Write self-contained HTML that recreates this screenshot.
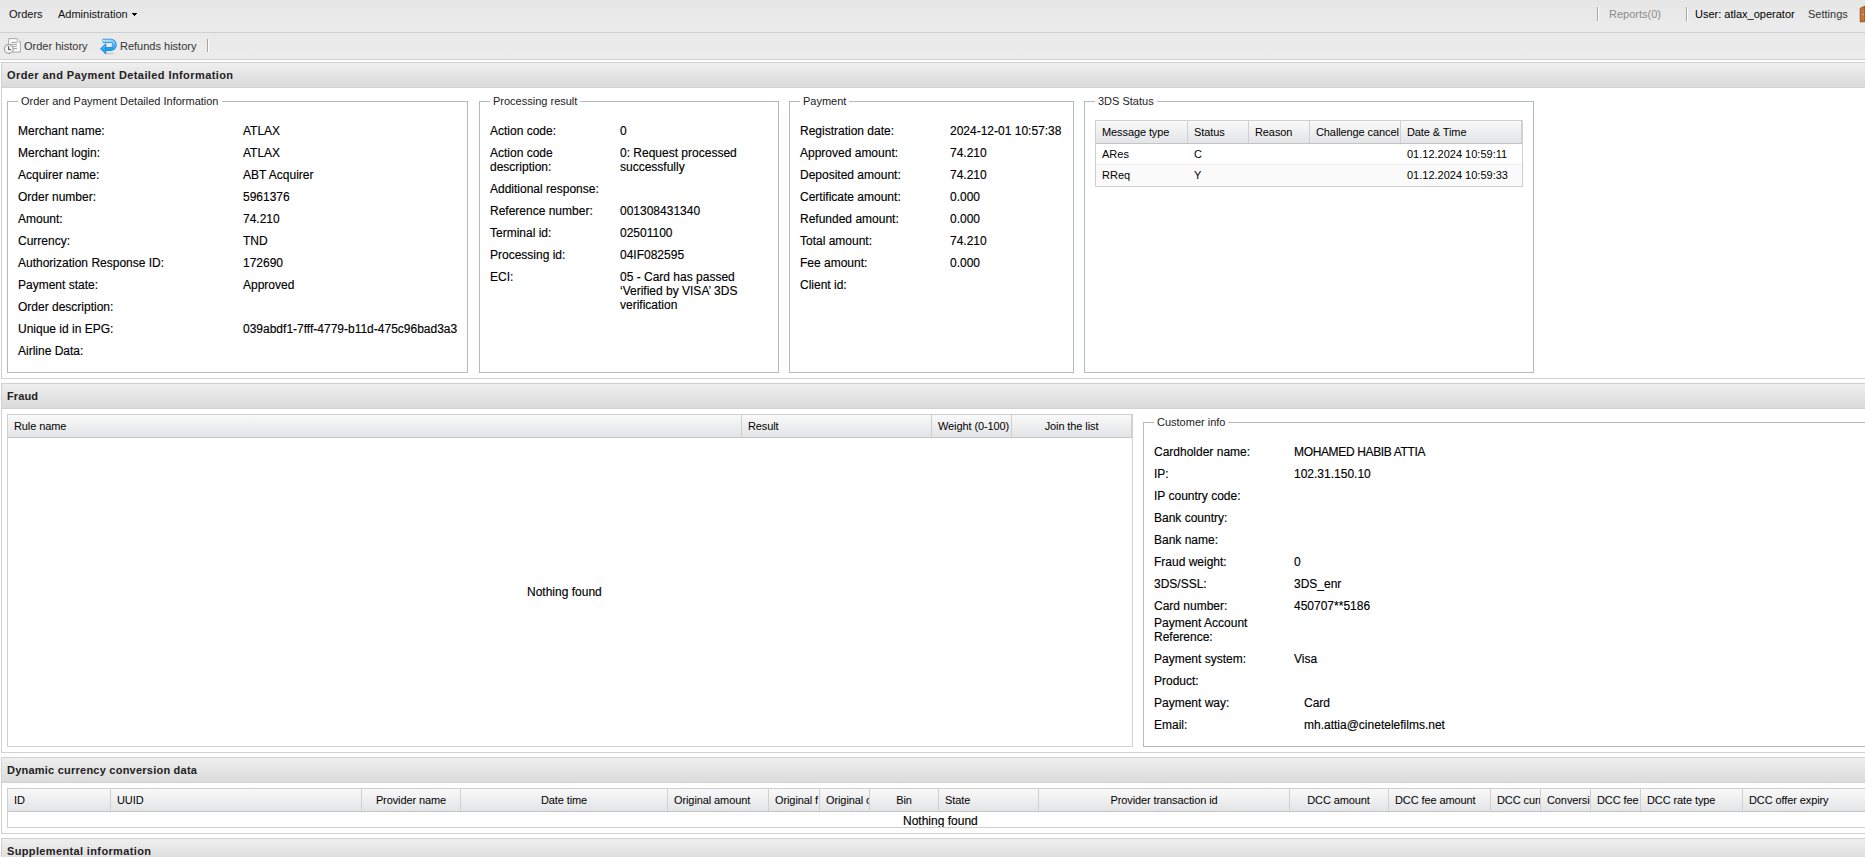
<!DOCTYPE html><html><head><meta charset="utf-8"><style>
*{box-sizing:border-box;margin:0;padding:0}
html,body{width:1865px;height:857px;overflow:hidden;background:#fff;font-family:"Liberation Sans", sans-serif;font-size:11px;color:#000}
.abs{position:absolute;white-space:nowrap}
.tb1{position:absolute;left:0;top:0;width:1865px;height:33px;background:linear-gradient(#e6e6e6,#ececec);border-bottom:1px solid #d0d0d0}
.tb2{position:absolute;left:0;top:33px;width:1865px;height:27px;background:linear-gradient(#e9e9e9,#ececec);border-bottom:1px solid #d0d0d0}
.panel{position:absolute;left:1px;width:1900px;border:1px solid #d0d0d0;background:#fff}
.ph{position:absolute;left:0;top:0;right:0;height:25px;background:linear-gradient(#efefef,#dadada);border-bottom:1px solid #d2d2d2}
.pt{position:absolute;left:5px;top:6px;font-weight:bold;font-size:11px;color:#222;letter-spacing:0.4px}
.fs{position:absolute;border:1px solid #b5b8c8}
.lg{position:absolute;top:-8px;background:#fff;padding:0 3px;font-size:11px;color:#222;line-height:14px}
.t12{font-size:12px;line-height:14px;color:#000;-webkit-text-stroke:0.15px #000}
.sep{position:absolute;width:1px;background:#aba592;box-shadow:1px 0 0 #fff}
.grid{position:absolute;border:1px solid #d0d0d0;background:#fff;overflow:hidden}
.gh{position:absolute;left:0;top:0;right:0;height:23px;background:linear-gradient(#f9f9f9,#e3e4e6);border-bottom:1px solid #c5c5c5}
.gc{position:absolute;top:0;height:22px;border-right:1px solid #d0d0d0;line-height:22px;overflow:hidden;white-space:nowrap;font-size:11px;color:#000;letter-spacing:-0.1px}
.g11{font-size:11px}
</style></head><body>
<div class="tb1"></div>
<div class="abs" style="left:9px;top:8px;font-size:11px;color:#111">Orders</div>
<div class="abs" style="left:58px;top:8px;font-size:11px;color:#111">Administration</div>
<div class="abs" style="left:132px;top:13px;width:5px;height:1px;background:#000"></div><div class="abs" style="left:133px;top:14px;width:3px;height:1px;background:#000"></div><div class="abs" style="left:134px;top:15px;width:1px;height:1px;background:#000"></div>
<div class="sep" style="left:1597px;top:7px;height:14px"></div>
<div class="abs" style="left:1609px;top:8px;color:#8c8c8c">Reports(0)</div>
<div class="sep" style="left:1686px;top:7px;height:14px"></div>
<div class="abs" style="left:1695px;top:8px;color:#000">User: atlax_operator</div>
<div class="abs" style="left:1808px;top:8px;color:#333">Settings</div>
<div class="tb2"></div>
<svg class="abs" style="left:2px;top:36px" width="20" height="20" viewBox="0 0 20 20"><path d="M6.7,2.6 H15.2 L18.4,5.8 V16.1 H6.7 Z" fill="#fafafa" stroke="#a8a8a8" stroke-width="1"/><path d="M15.2,2.6 V5.8 H18.4" fill="#fff" stroke="#a8a8a8" stroke-width="0.8"/><path d="M9.3,6.4 H15 M9.3,8.4 H15 M9.3,10.4 H15 M9.3,12.5 H15" stroke="#9a9a9a" stroke-width="0.9"/><circle cx="6.8" cy="13" r="4.4" fill="#f4f4f0" stroke="#a0a0a0" stroke-width="1.1"/><path d="M6.6,10.3 V13.6 H8.9" fill="none" stroke="#383838" stroke-width="0.95"/></svg>
<svg class="abs" style="left:98px;top:36px" width="20" height="20" viewBox="0 0 20 20"><defs><linearGradient id="ag" x1="0" y1="0" x2="0" y2="1"><stop offset="0" stop-color="#8ad6fb"/><stop offset="1" stop-color="#12a4f2"/></linearGradient></defs><ellipse cx="11" cy="17.6" rx="5.5" ry="1.1" fill="#c8c8c8" opacity="0.7"/><path d="M4.6,4.9 H12.6 A4.05,4.05 0 0 1 12.6,13 H7.5" fill="none" stroke="#3088dc" stroke-width="4.2" stroke-linejoin="round"/><path d="M4.6,4.9 H12.6 A4.05,4.05 0 0 1 12.6,13 H7.5" fill="none" stroke="url(#ag)" stroke-width="2.6"/><path d="M5,4.7 H12.2" stroke="#a6e6ff" stroke-width="1.1"/><path d="M2.5,12.8 L7.8,7.8 V17.8 Z" fill="#1cabf6" stroke="#2a7cd0" stroke-width="0.9" stroke-linejoin="round"/><path d="M4.5,12.6 L7,10.3" stroke="#7fd6ff" stroke-width="0.8"/></svg>
<svg class="abs" style="left:1859px;top:4px" width="6" height="20" viewBox="0 0 6 20"><path d="M1.2,4.2 L6,2 V17.6 L1.2,18 Z" fill="#bd6c2e" stroke="#7e3f14" stroke-width="0.7"/><path d="M2.6,4.6 V17 M4.6,3.6 V16.8" stroke="#d4883f" stroke-width="0.6"/><circle cx="4" cy="10.4" r="0.7" fill="#d8dce8"/></svg>
<div class="abs" style="left:24px;top:40px;color:#333">Order history</div>
<div class="abs" style="left:120px;top:40px;color:#333">Refunds history</div>
<div class="sep" style="left:207px;top:39px;height:13px"></div>
<div class="panel" style="top:62px;height:317px"><div class="ph"><div class="pt" style="letter-spacing:0.41px">Order and Payment Detailed Information</div></div></div>
<div class="fs" style="left:7px;top:101px;width:461px;height:272px"><div class="lg" style="left:10px">Order and Payment Detailed Information</div></div>
<div class="fs" style="left:479px;top:101px;width:300px;height:272px"><div class="lg" style="left:10px">Processing result</div></div>
<div class="fs" style="left:789px;top:101px;width:285px;height:272px"><div class="lg" style="left:10px">Payment</div></div>
<div class="fs" style="left:1084px;top:101px;width:450px;height:272px"><div class="lg" style="left:10px">3DS Status</div></div>
<div class="abs t12" style="left:18px;top:124px">Merchant name:</div>
<div class="abs t12" style="left:243px;top:124px">ATLAX</div>
<div class="abs t12" style="left:18px;top:146px">Merchant login:</div>
<div class="abs t12" style="left:243px;top:146px">ATLAX</div>
<div class="abs t12" style="left:18px;top:168px">Acquirer name:</div>
<div class="abs t12" style="left:243px;top:168px">ABT Acquirer</div>
<div class="abs t12" style="left:18px;top:190px">Order number:</div>
<div class="abs t12" style="left:243px;top:190px">5961376</div>
<div class="abs t12" style="left:18px;top:212px">Amount:</div>
<div class="abs t12" style="left:243px;top:212px">74.210</div>
<div class="abs t12" style="left:18px;top:234px">Currency:</div>
<div class="abs t12" style="left:243px;top:234px">TND</div>
<div class="abs t12" style="left:18px;top:256px">Authorization Response ID:</div>
<div class="abs t12" style="left:243px;top:256px">172690</div>
<div class="abs t12" style="left:18px;top:278px">Payment state:</div>
<div class="abs t12" style="left:243px;top:278px">Approved</div>
<div class="abs t12" style="left:18px;top:300px">Order description:</div>
<div class="abs t12" style="left:18px;top:322px">Unique id in EPG:</div>
<div class="abs t12" style="left:243px;top:322px">039abdf1-7fff-4779-b11d-475c96bad3a3</div>
<div class="abs t12" style="left:18px;top:344px">Airline Data:</div>
<div class="abs t12" style="left:490px;top:124px">Action code:</div>
<div class="abs t12" style="left:620px;top:124px">0</div>
<div class="abs t12" style="left:490px;top:146px">Action code<br>description:</div>
<div class="abs t12" style="left:620px;top:146px">0: Request processed<br>successfully</div>
<div class="abs t12" style="left:490px;top:182px">Additional response:</div>
<div class="abs t12" style="left:490px;top:204px">Reference number:</div>
<div class="abs t12" style="left:620px;top:204px">001308431340</div>
<div class="abs t12" style="left:490px;top:226px">Terminal id:</div>
<div class="abs t12" style="left:620px;top:226px">02501100</div>
<div class="abs t12" style="left:490px;top:248px">Processing id:</div>
<div class="abs t12" style="left:620px;top:248px">04IF082595</div>
<div class="abs t12" style="left:490px;top:270px">ECI:</div>
<div class="abs t12" style="left:620px;top:270px">05 - Card has passed<br>&#8216;Verified by VISA&#8217; 3DS<br>verification</div>
<div class="abs t12" style="left:800px;top:124px">Registration date:</div>
<div class="abs t12" style="left:950px;top:124px">2024-12-01 10:57:38</div>
<div class="abs t12" style="left:800px;top:146px">Approved amount:</div>
<div class="abs t12" style="left:950px;top:146px">74.210</div>
<div class="abs t12" style="left:800px;top:168px">Deposited amount:</div>
<div class="abs t12" style="left:950px;top:168px">74.210</div>
<div class="abs t12" style="left:800px;top:190px">Certificate amount:</div>
<div class="abs t12" style="left:950px;top:190px">0.000</div>
<div class="abs t12" style="left:800px;top:212px">Refunded amount:</div>
<div class="abs t12" style="left:950px;top:212px">0.000</div>
<div class="abs t12" style="left:800px;top:234px">Total amount:</div>
<div class="abs t12" style="left:950px;top:234px">74.210</div>
<div class="abs t12" style="left:800px;top:256px">Fee amount:</div>
<div class="abs t12" style="left:950px;top:256px">0.000</div>
<div class="abs t12" style="left:800px;top:278px">Client id:</div>
<div class="grid" style="left:1095px;top:120px;width:428px;height:67px"><div class="gh"><div class="gc" style="left:0px;width:92px;text-align:left;padding:0 6px">Message type</div><div class="gc" style="left:92px;width:61px;text-align:left;padding:0 6px">Status</div><div class="gc" style="left:153px;width:61px;text-align:left;padding:0 6px">Reason</div><div class="gc" style="left:214px;width:91px;text-align:left;padding:0 6px">Challenge cancel</div><div class="gc" style="left:305px;width:121px;text-align:left;padding:0 6px">Date &amp; Time</div></div><div style="position:absolute;left:0;top:23px;width:100%;height:21px;border-bottom:1px solid #ededed"></div><div style="position:absolute;left:0;top:44px;width:100%;height:21px;background:#fafafa"></div><div class="abs g11" style="left:6px;top:27px">ARes</div><div class="abs g11" style="left:98px;top:27px">C</div><div class="abs g11" style="left:311px;top:27px">01.12.2024 10:59:11</div><div class="abs g11" style="left:6px;top:48px">RReq</div><div class="abs g11" style="left:98px;top:48px">Y</div><div class="abs g11" style="left:311px;top:48px">01.12.2024 10:59:33</div></div>
<div class="panel" style="top:383px;height:370px"><div class="ph"><div class="pt" style="letter-spacing:0.1px">Fraud</div></div></div>
<div class="grid" style="left:7px;top:414px;width:1126px;height:333px"><div class="gh"><div class="gc" style="left:0px;width:734px;text-align:left;padding:0 6px">Rule name</div><div class="gc" style="left:734px;width:190px;text-align:left;padding:0 6px">Result</div><div class="gc" style="left:924px;width:80px;text-align:left;padding:0 6px">Weight (0-100)</div><div class="gc" style="left:1004px;width:120px;text-align:center;padding:0 6px">Join the list</div></div><div class="abs t12" style="left:519px;top:170px">Nothing found</div></div>
<div class="fs" style="left:1143px;top:422px;width:800px;height:325px"><div class="lg" style="left:10px">Customer info</div></div>
<div class="abs t12" style="left:1154px;top:445px">Cardholder name:</div>
<div class="abs t12" style="left:1294px;top:445px"><span style="letter-spacing:-0.35px">MOHAMED HABIB ATTIA</span></div>
<div class="abs t12" style="left:1154px;top:467px">IP:</div>
<div class="abs t12" style="left:1294px;top:467px">102.31.150.10</div>
<div class="abs t12" style="left:1154px;top:489px">IP country code:</div>
<div class="abs t12" style="left:1154px;top:511px">Bank country:</div>
<div class="abs t12" style="left:1154px;top:533px">Bank name:</div>
<div class="abs t12" style="left:1154px;top:555px">Fraud weight:</div>
<div class="abs t12" style="left:1294px;top:555px">0</div>
<div class="abs t12" style="left:1154px;top:577px">3DS/SSL:</div>
<div class="abs t12" style="left:1294px;top:577px">3DS_enr</div>
<div class="abs t12" style="left:1154px;top:599px">Card number:</div>
<div class="abs t12" style="left:1294px;top:599px">450707**5186</div>
<div class="abs t12" style="left:1154px;top:616px">Payment Account<br>Reference:</div>
<div class="abs t12" style="left:1154px;top:652px">Payment system:</div>
<div class="abs t12" style="left:1294px;top:652px">Visa</div>
<div class="abs t12" style="left:1154px;top:674px">Product:</div>
<div class="abs t12" style="left:1154px;top:696px">Payment way:</div>
<div class="abs t12" style="left:1304px;top:696px">Card</div>
<div class="abs t12" style="left:1154px;top:718px">Email:</div>
<div class="abs t12" style="left:1304px;top:718px">mh.attia@cinetelefilms.net</div>
<div class="panel" style="top:757px;height:77px"><div class="ph"><div class="pt" style="letter-spacing:0.23px">Dynamic currency conversion data</div></div></div>
<div class="grid" style="left:7px;top:788px;width:1900px;height:40px"><div class="gh"><div class="gc" style="left:0px;width:103px;text-align:left;padding:0 6px">ID</div><div class="gc" style="left:103px;width:251px;text-align:left;padding:0 6px">UUID</div><div class="gc" style="left:354px;width:99px;text-align:center;padding:0 6px">Provider name</div><div class="gc" style="left:453px;width:207px;text-align:center;padding:0 6px">Date time</div><div class="gc" style="left:660px;width:101px;text-align:left;padding:0 6px">Original amount</div><div class="gc" style="left:761px;width:51px;text-align:left;padding:0 6px">Original f</div><div class="gc" style="left:812px;width:50px;text-align:left;padding:0 6px">Original c</div><div class="gc" style="left:862px;width:69px;text-align:center;padding:0 6px">Bin</div><div class="gc" style="left:931px;width:100px;text-align:left;padding:0 6px">State</div><div class="gc" style="left:1031px;width:251px;text-align:center;padding:0 6px">Provider transaction id</div><div class="gc" style="left:1281px;width:100px;text-align:center;padding:0 6px">DCC amount</div><div class="gc" style="left:1381px;width:102px;text-align:left;padding:0 6px">DCC fee amount</div><div class="gc" style="left:1483px;width:50px;text-align:left;padding:0 6px">DCC curr</div><div class="gc" style="left:1533px;width:50px;text-align:left;padding:0 6px">Conversion</div><div class="gc" style="left:1583px;width:50px;text-align:left;padding:0 6px">DCC fee</div><div class="gc" style="left:1633px;width:102px;text-align:left;padding:0 6px">DCC rate type</div><div class="gc" style="left:1735px;width:150px;text-align:left;padding:0 6px">DCC offer expiry</div></div><div class="abs t12" style="left:895px;top:25px">Nothing found</div></div>
<div class="panel" style="top:838px;height:40px"><div class="ph"><div class="pt" style="letter-spacing:0.36px">Supplemental information</div></div></div>
</body></html>
